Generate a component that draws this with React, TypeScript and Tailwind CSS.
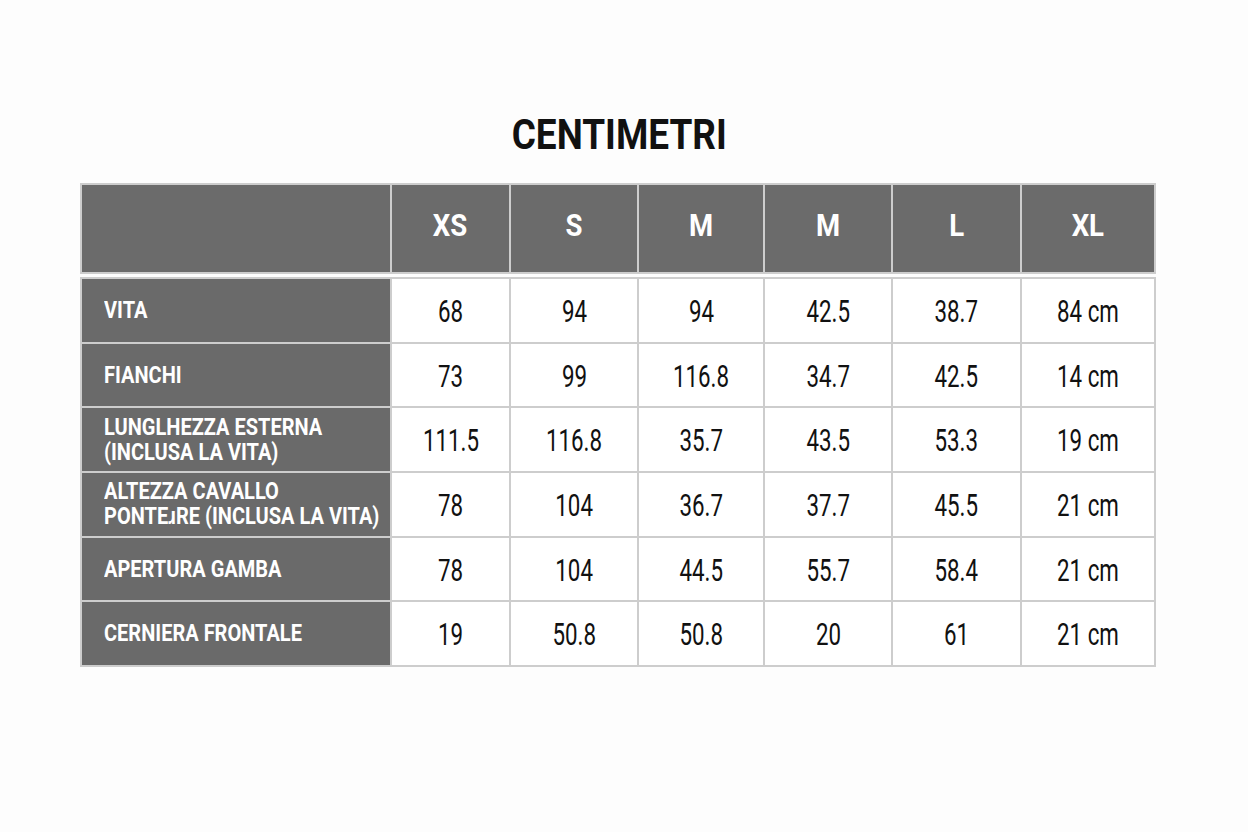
import React from "react";

const sizes = ["XS", "S", "M", "M", "L", "XL"];

const rows: { label: React.ReactNode; values: string[] }[] = [
  { label: "VITA", values: ["68", "94", "94", "42.5", "38.7", "84 cm"] },
  { label: "FIANCHI", values: ["73", "99", "116.8", "34.7", "42.5", "14 cm"] },
  {
    label: (
      <>
        <span className="block">LUNGLHEZZA ESTERNA</span>
        <span className="block">(INCLUSA LA VITA)</span>
      </>
    ),
    values: ["111.5", "116.8", "35.7", "43.5", "53.3", "19 cm"],
  },
  {
    label: (
      <>
        <span className="block">ALTEZZA CAVALLO</span>
        <span className="block">PONTEɹRE (INCLUSA LA VITA)</span>
      </>
    ),
    values: ["78", "104", "36.7", "37.7", "45.5", "21 cm"],
  },
  { label: "APERTURA GAMBA", values: ["78", "104", "44.5", "55.7", "58.4", "21 cm"] },
  { label: "CERNIERA FRONTALE", values: ["19", "50.8", "50.8", "20", "61", "21 cm"] },
];

const cols = "grid-cols-[308px_117px_126px_124px_126px_127px_132px]";

export default function App() {
  return (
    <div className="w-full h-[832px] bg-[#fdfdfd] flex flex-col items-center font-['Roboto',sans-serif]">
      <h1 className="mt-[110px] ml-[-10px] h-[50px] flex items-center text-[42px] leading-none font-bold text-[#111]">
        <span className="inline-block scale-x-[0.88]">CENTIMETRI</span>
      </h1>
      <div className="mt-[23px] ml-[-12px] flex flex-col">
        <div className={`grid ${cols} gap-[2px] p-[2px] bg-[#cdcdcd] h-[91px]`}>
          <div className="bg-[#6b6b6b]" />
          {sizes.map((s, i) => (
            <div key={i} className="bg-[#6b6b6b] flex items-center justify-center text-white font-bold text-[32px] leading-none pb-[7px]">
              <span className="inline-block scale-x-[0.86]">{s}</span>
            </div>
          ))}
        </div>
        <div className="h-[3px] bg-[#fdfdfd]" />
        <div className={`grid ${cols} auto-rows-[62.7px] gap-[2px] p-[2px] bg-[#cdcdcd]`}>
          {rows.map((r, ri) => (
            <React.Fragment key={ri}>
              <div className="bg-[#6a6a6a] flex items-center pl-[22px] text-white font-bold text-[23px] leading-[25px] whitespace-nowrap">
                <span className="inline-block origin-left scale-x-[0.87]">{r.label}</span>
              </div>
              {r.values.map((v, vi) => (
                <div key={vi} className="bg-white flex items-center justify-center text-[#111] text-[31px] leading-none pt-[2px]">
                  <span className="inline-block scale-x-[0.72] whitespace-nowrap">{v}</span>
                </div>
              ))}
            </React.Fragment>
          ))}
        </div>
      </div>
    </div>
  );
}
